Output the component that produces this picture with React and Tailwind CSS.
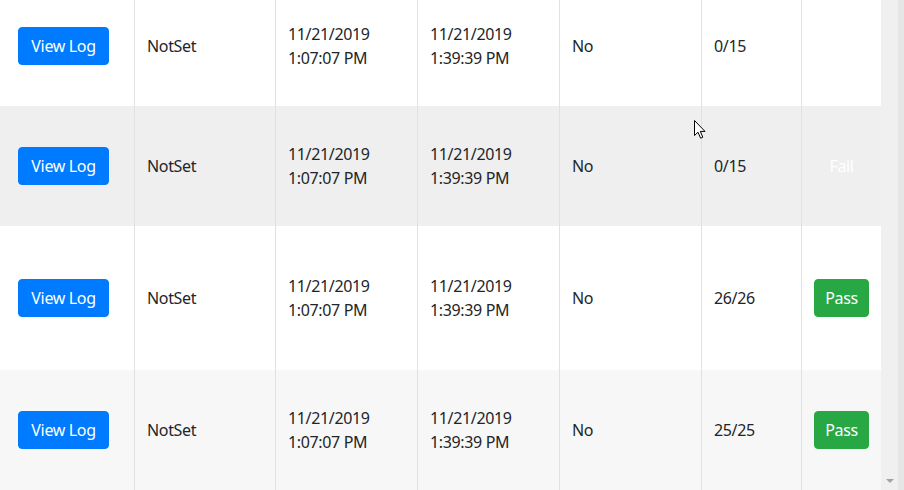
import React from "react";

const rows = [
  { bg: "bg-white", h: "h-[120px]", score: "0/15", result: null },
  { bg: "bg-[#efefef]", h: "h-[120px]", score: "0/15", result: "fail" },
  { bg: "bg-white", h: "h-[144px]", score: "26/26", result: "pass" },
  { bg: "bg-[#f7f7f7]", h: "h-[120px]", score: "25/25", result: "pass" },
];

const Cursor = () => (
  <svg
    width="14"
    height="20"
    viewBox="0 0 14 20"
    className="absolute left-[694px] top-[120px]"
  >
    <path
      d="M0.5 0.5 L0.5 15.5 L4 12.2 L6.6 18.2 L8.8 17.2 L6.3 11.4 L11 11.4 Z"
      fill="white"
      stroke="black"
      strokeWidth="1"
      strokeLinejoin="miter"
    />
  </svg>
);

const App = () => {
  return (
    <div
      className="relative w-[904px] h-[490px] overflow-hidden flex bg-white text-[16px] leading-6 tracking-[-0.35px] text-[#212529]"
      style={{ fontFamily: '"Noto Sans", "Open Sans", sans-serif' }}
    >
      <div className="w-[881px] h-[490px] overflow-hidden">
        <div className="-mt-[14px] flex flex-col">
          {rows.map((r, idx) => (
            <div
              key={idx}
              className={`grid grid-cols-[134px_141px_142px_142px_142px_100px_80px] ${r.bg} ${r.h}`}
            >
              <div className="flex items-center pl-[18px]">
                <button className="h-[38px] w-[91px] rounded bg-[#007bff] text-white border border-[#007bff]">
                  View Log
                </button>
              </div>
              <div className="flex items-center border-l border-[#dee2e6] pl-3">
                NotSet
              </div>
              <div className="flex flex-col justify-center border-l border-[#dee2e6] pl-3">
                <span>11/21/2019</span>
                <span>1:07:07 PM</span>
              </div>
              <div className="flex flex-col justify-center border-l border-[#dee2e6] pl-3">
                <span>11/21/2019</span>
                <span>1:39:39 PM</span>
              </div>
              <div className="flex items-center border-l border-[#dee2e6] pl-3">
                No
              </div>
              <div className="flex items-center border-l border-[#dee2e6] pl-3">
                {r.score}
              </div>
              <div className="flex items-center justify-center border-l border-[#dee2e6]">
                {r.result === "pass" && (
                  <button className="h-[38px] w-[55px] rounded bg-[#28a745] text-white border border-[#28a745]">
                    Pass
                  </button>
                )}
                {r.result === "fail" && <span className="text-white">Fail</span>}
              </div>
            </div>
          ))}
        </div>
      </div>
      <div className="w-[23px] h-[490px] flex">
        <div className="w-[17px] h-full bg-[#f0f0f0] flex flex-col justify-end items-center pb-[7px]">
          <div className="w-0 h-0 border-l-[4px] border-r-[4px] border-t-[4px] border-l-transparent border-r-transparent border-t-[#a3a3a3]" />
        </div>
        <div className="w-[6px] h-full bg-[#e6e6e6]" />
      </div>
      <Cursor />
    </div>
  );
};

export default App;
